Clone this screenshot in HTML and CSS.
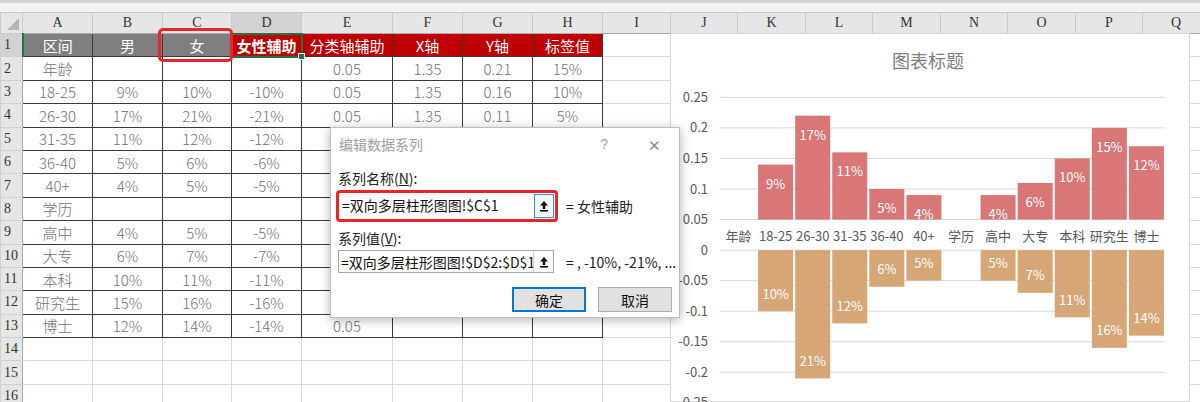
FILE: index.html
```html
<!DOCTYPE html>
<html lang="zh">
<head>
    <meta charset="utf-8">
    <title>双向多层柱形图</title>
    <link rel="stylesheet" href="styles.css">
</head>
<body>
    <div class="ribbon"></div>
    <div class="sheet">
        <table class="grid" id="grid">
            <colgroup id="cols"></colgroup>
        </table>

        <!-- marca roja sobre C1 -->
        <div class="mark"></div>

        <div class="chart">
            <svg id="chart" width="520" height="369" viewBox="0 0 520 369"></svg>
        </div>

        <div class="dialog">
            <div class="dlg-title">
                <span>编辑数据系列</span>
                <span class="help">?</span>
                <span class="close">✕</span>
            </div>
            <div class="dlg-body">
                <div class="lbl">系列名称(<u>N</u>):</div>
                <div class="field-row">
                    <div class="hot">
                        <div class="ref">
                            <span class="ref-text">=双向多层柱形图图!$C$1</span>
                            <span class="ref-btn focus">
                                <svg width="10" height="12" viewBox="0 0 10 12"><path d="M5 1 L9 5.5 H6.3 V9 H3.7 V5.5 H1 Z" fill="#111"/><rect x="1" y="10" width="8" height="1.6" fill="#111"/></svg>
                            </span>
                        </div>
                    </div>
                    <span class="preview">= 女性辅助</span>
                </div>
                <div class="lbl second">系列值(<u>V</u>):</div>
                <div class="field-row">
                    <div class="ref plain">
                        <span class="ref-text">=双向多层柱形图图!$D$2:$D$1.</span>
                        <span class="ref-btn">
                            <svg width="10" height="12" viewBox="0 0 10 12"><path d="M5 1 L9 5.5 H6.3 V9 H3.7 V5.5 H1 Z" fill="#111"/><rect x="1" y="10" width="8" height="1.6" fill="#111"/></svg>
                        </span>
                    </div>
                    <span class="preview second">= , -10%, -21%, ...</span>
                </div>
                <div class="dlg-buttons">
                    <button class="btn primary">确定</button>
                    <button class="btn">取消</button>
                </div>
            </div>
        </div>
    </div>

    <script>
        const anchos = [22, 70, 70, 69, 70, 91, 70, 70, 70, 68, 67, 68, 67, 68, 67, 68, 67, 67];
        const letras = ['', 'A', 'B', 'C', 'D', 'E', 'F', 'G', 'H', 'I', 'J', 'K', 'L', 'M', 'N', 'O', 'P', 'Q'];

        // E5:E12 quedan tapadas por el diálogo
        const filas = [
            ['区间', '男', '女', '女性辅助', '分类轴辅助', 'X轴', 'Y轴', '标签值'],
            ['年龄', '', '', '', '0.05', '1.35', '0.21', '15%'],
            ['18-25', '9%', '10%', '-10%', '0.05', '1.35', '0.16', '10%'],
            ['26-30', '17%', '21%', '-21%', '0.05', '1.35', '0.11', '5%'],
            ['31-35', '11%', '12%', '-12%', '', '', '', ''],
            ['36-40', '5%', '6%', '-6%', '', '', '', ''],
            ['40+', '4%', '5%', '-5%', '', '', '', ''],
            ['学历', '', '', '', '', '', '', ''],
            ['高中', '4%', '5%', '-5%', '', '', '', ''],
            ['大专', '6%', '7%', '-7%', '', '', '', ''],
            ['本科', '10%', '11%', '-11%', '', '', '', ''],
            ['研究生', '15%', '16%', '-16%', '', '', '', ''],
            ['博士', '12%', '14%', '-14%', '0.05', '', '', '']
        ];

        const tabla = document.getElementById('grid');
        document.getElementById('cols').innerHTML = anchos.map(w => `<col style="width:${w}px">`).join('');

        let html = '<tr class="cols">';
        letras.forEach((l, i) => {
            let cls = i === 0 ? 'corner' : 'colhead';
            if (l === 'D') cls += ' sel';
            html += `<td class="${cls}">${l}</td>`;
        });
        html += '</tr>';

        for (let r = 1; r <= 16; r++) {
            const datos = filas[r - 1];
            html += `<tr><td class="rowhead${r === 1 ? ' sel' : ''}">${r}</td>`;
            for (let c = 1; c < letras.length; c++) {
                let cls = '';
                let txt = '';
                if (datos && c <= 8) {
                    txt = datos[c - 1];
                    cls = 'data';
                    if (r === 1) cls += c <= 3 ? ' h-gray' : ' h-red';
                    if (r === 1 && c === 4) cls += ' active';
                }
                html += `<td class="${cls}">${txt}</td>`;
            }
            html += '</tr>';
        }
        tabla.insertAdjacentHTML('beforeend', html);

        // gráfico
        const cats = ['年龄', '18-25', '26-30', '31-35', '36-40', '40+', '学历', '高中', '大专', '本科', '研究生', '博士'];
        const hombres = [null, 9, 17, 11, 5, 4, null, 4, 6, 10, 15, 12];
        const mujeres = [null, 10, 21, 12, 6, 5, null, 5, 7, 11, 16, 14];

        const y0 = 217.1;   // valor 0
        const k = 611;      // px por unidad
        const x0 = 50;
        const paso = 445 / 12;
        const yv = v => y0 - v * k;

        let s = '<text class="ttl" x="258" y="35">图表标题</text>';
        for (let i = 0; i <= 10; i++) {
            const v = 0.25 - i * 0.05;
            const y = yv(v);
            s += `<line class="gl" x1="${x0}" x2="495" y1="${y}" y2="${y}"/>`;
            s += `<text class="ax" x="38" y="${y + 4.5}">${String(+v.toFixed(2))}</text>`;
        }

        cats.forEach((c, i) => {
            const x = x0 + paso * i + 1;
            const cx = x0 + paso * (i + 0.5);
            if (hombres[i] !== null) {
                const top = yv(0.05 + hombres[i] / 100);
                const bot = yv(0.05);
                s += `<rect class="up" x="${x}" y="${top}" width="35" height="${bot - top}"/>`;
                s += `<text class="lb" x="${cx}" y="${top + 24}">${hombres[i]}%</text>`;
            }
            if (mujeres[i] !== null) {
                const bot = yv(-mujeres[i] / 100);
                s += `<rect class="down" x="${x}" y="${y0}" width="35" height="${bot - y0}"/>`;
                s += `<text class="lb" x="${cx}" y="${bot - 12.5}">${mujeres[i]}%</text>`;
            }
            s += `<text class="cat" x="${cx}" y="207.5">${c}</text>`;
        });

        document.getElementById('chart').innerHTML = s;
    </script>
</body>
</html>
```

FILE: styles.css
```css
body {
    margin: 0;
    width: 1200px;
    height: 402px;
    overflow: hidden;
    background: #fff;
    font-family: "Noto Sans CJK SC", sans-serif;
}
.ribbon {
    height: 12px;
    background: linear-gradient(#d4d4d4 0, #d4d4d4 3px, #f2f2f2 3px);
}
.sheet {
    position: relative;
}
.grid {
    border-collapse: collapse;
    table-layout: fixed;
    width: 1209px;
}
.grid tr {
    height: 23.4px;
}
.grid tr.cols {
    height: 21px;
}
.grid td {
    padding: 0;
    border: 1px solid #dadada;
    text-align: center;
    font-size: 15px;
    font-weight: 300;
    color: #727272;
    white-space: nowrap;
    overflow: hidden;
}

/* cabeceras de filas y columnas */
.grid td.corner,
.grid td.colhead,
.grid td.rowhead {
    background: #e6e6e6;
    border-color: #c9c9c9;
    font-family: "Liberation Serif", serif;
    font-weight: 400;
    color: #333;
    font-size: 14px;
}
.grid td.colhead {
    border-bottom-color: #ababab;
}
.grid td.rowhead {
    text-align: left;
    padding-left: 3px;
    border-color: #d0d0d0;
    border-right-color: #ababab;
}
.grid td.colhead.sel {
    background: #d2d2d2;
}
.grid td.rowhead.sel {
    background: #d2d2d2;
    border-right: 2px solid #217346;
}
.grid td.corner {
    position: relative;
}
.grid td.corner::after {
    content: "";
    position: absolute;
    right: 3px;
    bottom: 3px;
    border-left: 12px solid transparent;
    border-bottom: 12px solid #b5b5b5;
}

/* zona de datos */
.grid td.data {
    border-color: #3a3a3a;
}
.grid td.h-gray {
    background: #7f7f7f;
    color: #fff;
    font-weight: 400;
}
.grid td.h-red {
    background: #c00000;
    color: #fff;
    font-weight: 400;
}
.grid td.active {
    position: relative;
    font-weight: 700;
    overflow: visible;
    outline: 2px solid #217346;
    outline-offset: -1px;
}
.grid td.active::after {
    content: "";
    position: absolute;
    right: -4px;
    bottom: -4px;
    width: 5px;
    height: 5px;
    background: #217346;
    border: 1px solid #fff;
}

.mark {
    position: absolute;
    left: 158px;
    top: 16px;
    width: 75px;
    height: 34px;
    box-sizing: border-box;
    border: 3px solid #e8262a;
    border-radius: 5px;
}

/* gráfico */
.chart {
    position: absolute;
    left: 670px;
    top: 21px;
    width: 520px;
    height: 369px;
    background: #fff;
    border: 1px solid #d9d9d9;
    box-sizing: border-box;
}
.chart svg {
    display: block;
    margin: -1px 0 0 -1px;
    font-family: "Noto Sans CJK SC", sans-serif;
}
.chart .ttl {
    font-size: 18px;
    fill: #7f7f7f;
    text-anchor: middle;
}
.chart .gl {
    stroke: #d9d9d9;
    stroke-width: 1;
}
.chart .ax {
    font-size: 13px;
    fill: #595959;
    text-anchor: end;
}
.chart .cat {
    font-size: 13px;
    fill: #595959;
    text-anchor: middle;
}
.chart .up { fill: #d97676; }
.chart .down { fill: #d7a677; }
.chart .lb {
    font-size: 13px;
    fill: #fff;
    text-anchor: middle;
}

/* diálogo */
.dialog {
    position: absolute;
    left: 330px;
    top: 115px;
    width: 350px;
    height: 191px;
    box-sizing: border-box;
    background: #fff;
    border: 1px solid #bdbdbd;
    box-shadow: 0 2px 10px rgba(0, 0, 0, 0.3);
}
.dlg-title {
    height: 32px;
    display: flex;
    align-items: center;
    padding-left: 8px;
    font-size: 14px;
    color: #a0a0a0;
}
.dlg-title .help {
    margin-left: auto;
    font-family: "Liberation Sans", sans-serif;
    font-size: 14px;
}
.dlg-title .close {
    margin: 0 18px 0 40px;
    font-size: 15px;
    color: #8a8a8a;
}
.dlg-body {
    padding: 0 0 0 5px;
}
.lbl {
    margin: 9px 0 3px 2px;
    font-size: 14px;
    color: #222;
    line-height: 18px;
}
.lbl.second {
    margin-top: 7px;
}
.field-row {
    display: flex;
    align-items: center;
}
.hot {
    width: 222px;
    box-sizing: border-box;
    border: 3px solid #e8262a;
    border-radius: 4px;
    padding: 1px;
}
.ref {
    display: flex;
    height: 24px;
    background: #fff;
}
.ref.plain {
    width: 216px;
    height: 23px;
    margin-left: 2px;
    box-sizing: border-box;
    border: 1px solid #a9a9a9;
}
.ref-text {
    flex: 1;
    padding-left: 2px;
    font-size: 14px;
    line-height: 22px;
    color: #111;
    white-space: nowrap;
    overflow: hidden;
}
.ref-btn {
    width: 20px;
    flex: none;
    display: flex;
    align-items: center;
    justify-content: center;
    box-sizing: border-box;
    border-left: 1px solid #cfcfcf;
}
.ref-btn.focus {
    border: 1px solid #3c8fd8;
    background: #f4f9fe;
}
.preview {
    margin-left: 8px;
    font-size: 14px;
    color: #222;
}
.preview.second {
    margin-left: 12px;
}
.dlg-buttons {
    display: flex;
    justify-content: flex-end;
    gap: 12px;
    margin: 14px 7px 0 0;
}
.btn {
    width: 74px;
    height: 25px;
    box-sizing: border-box;
    background: #e1e1e1;
    border: 1px solid #adadad;
    font-family: "Noto Sans CJK SC", sans-serif;
    font-size: 14px;
    color: #111;
    padding: 0;
}
.btn.primary {
    border: 2px solid #0078d7;
}
```
